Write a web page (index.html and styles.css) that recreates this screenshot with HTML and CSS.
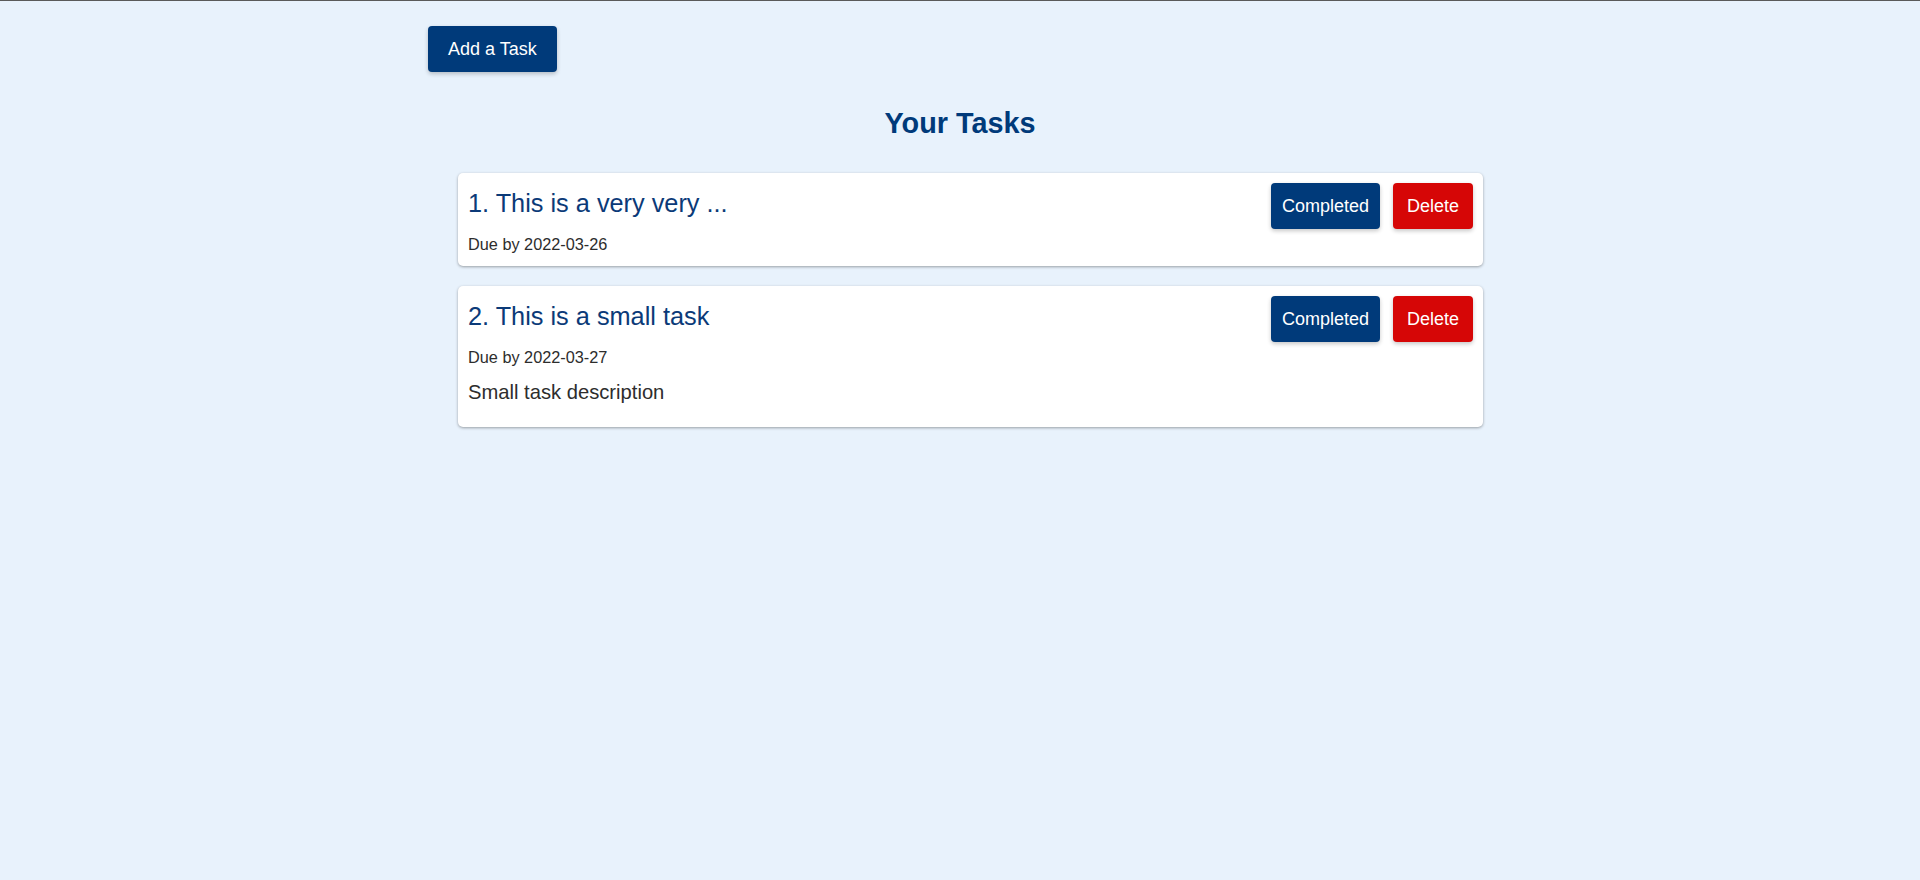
FILE: index.html
```html
<!DOCTYPE html>
<html lang="en">
<head>
<meta charset="utf-8">
<title>Your Tasks</title>
<link rel="stylesheet" href="styles.css">
</head>
<body>
<div class="app">
  <div class="toolbar">
    <button class="btn btn-add">Add a Task</button>
  </div>
  <h2 class="page-title">Your Tasks</h2>
  <ul class="task-list">
    <li class="task-card">
      <div class="task-head">
        <h3 class="task-name">1. This is a very very ...</h3>
        <div class="task-actions">
          <button class="btn btn-complete">Completed</button>
          <button class="btn btn-delete">Delete</button>
        </div>
      </div>
      <p class="task-due">Due by 2022-03-26</p>
    </li>
    <li class="task-card">
      <div class="task-head">
        <h3 class="task-name">2. This is a small task</h3>
        <div class="task-actions">
          <button class="btn btn-complete">Completed</button>
          <button class="btn btn-delete">Delete</button>
        </div>
      </div>
      <p class="task-due">Due by 2022-03-27</p>
      <p class="task-desc">Small task description</p>
    </li>
  </ul>
</div>
</body>
</html>
```
FILE: styles.css
```css
html, body {
  margin: 0;
  padding: 0;
  background: #e8f2fc;
  font-family: "Liberation Sans", Arial, sans-serif;
}

.app {
  border-top: 1px solid #5a5a5a;
  min-height: 879px;
  box-sizing: border-box;
}

.toolbar {
  display: flex;
  padding: 25px 0 0 428px;
}

.btn {
  font-family: "Liberation Sans", Arial, sans-serif;
  font-size: 18px;
  color: #ffffff;
  height: 46px;
  border: none;
  border-radius: 4px;
  box-shadow: 0 2px 4px rgba(0, 0, 0, 0.22);
  cursor: pointer;
  line-height: 46px;
}

.btn-add {
  background: #003a7a;
  padding: 0 20px;
}

.page-title {
  margin: 35px 0 0;
  text-align: center;
  font-size: 28.8px;
  font-weight: bold;
  color: #003a7a;
  line-height: 33px;
}

.task-list {
  list-style: none;
  margin: 33px 0 0 458px;
  padding: 0;
  width: 1025px;
  display: flex;
  flex-direction: column;
  gap: 20px;
}

.task-card {
  background: #ffffff;
  border-radius: 5px;
  padding: 10px;
  box-shadow: 0 1px 3px rgba(0, 0, 0, 0.35);
}

.task-head {
  display: flex;
  justify-content: space-between;
  align-items: flex-start;
}

.task-name {
  margin: 6px 0 0;
  font-size: 25.3px;
  font-weight: normal;
  color: #0b3a78;
  line-height: 29px;
}

.task-actions {
  display: flex;
  gap: 13px;
}

.btn-complete {
  background: #003a7a;
  padding: 0 11px;
}

.btn-delete {
  background: #d60606;
  padding: 0 14px;
}

.task-due {
  margin: 3px 0 0;
  font-size: 16.3px;
  line-height: 24px;
  color: #2d2d2d;
}

.task-desc {
  margin: 12px 0 13px;
  font-size: 20.2px;
  line-height: 23px;
  color: #2d2d2d;
}
```
